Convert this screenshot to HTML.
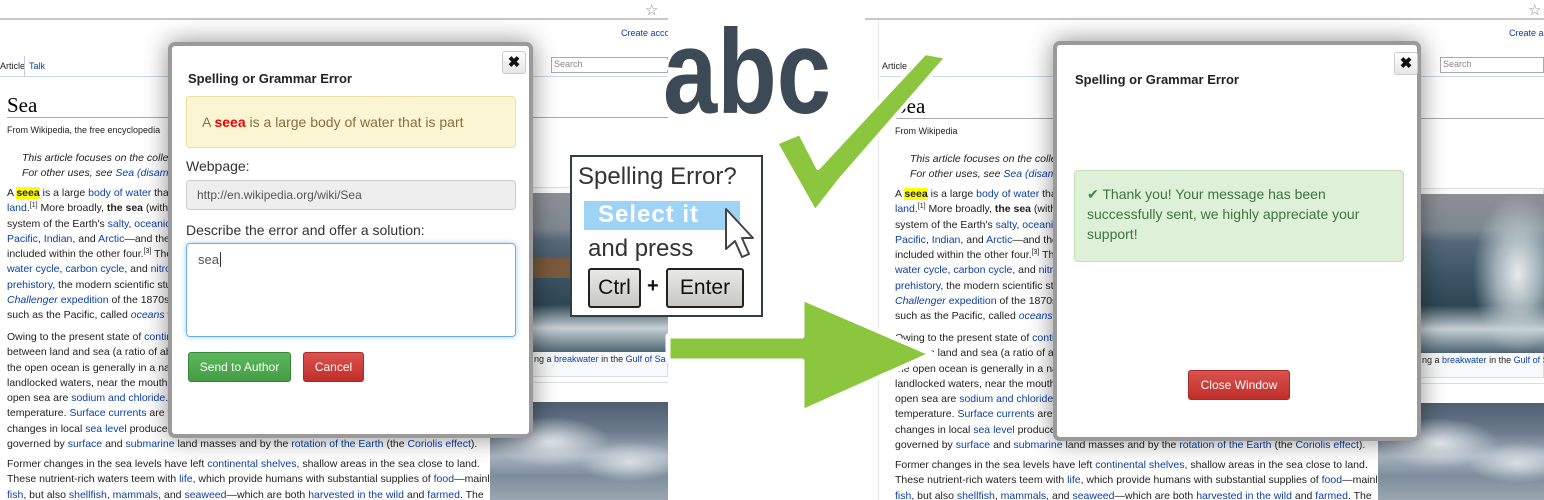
<!DOCTYPE html>
<html><head><meta charset="utf-8"><style>
*{margin:0;padding:0;box-sizing:border-box}
body{width:1544px;height:500px;overflow:hidden;background:#fff;position:relative;font-family:"Liberation Sans",sans-serif}
.abs{position:absolute}
.pg{position:absolute;top:0;height:500px;overflow:hidden;background:#fff}
.w{position:absolute;font-size:10.5px;color:#222;white-space:nowrap;line-height:15.3px}
.w a,.b{color:#0b3fa8}
sup{font-size:7px;line-height:0;vertical-align:4px}
.tl{position:absolute;left:0;right:0;top:18px;height:2px;background:#c8c8c8}
.modal{position:absolute;background:#fff;border:4px solid #9a9a9a;border-radius:7px;box-shadow:0 0 25px rgba(0,0,0,.45)}
.x{position:absolute;width:24px;height:23px;border:1px solid #ccc;border-radius:3px;background:linear-gradient(#fff,#e6e6e6);font-weight:bold;font-size:15px;text-align:center;line-height:21px;color:#111}
.ttl{position:absolute;font-weight:bold;font-size:13px;color:#222}
.btn{position:absolute;color:#fff;font-size:12px;text-align:center;border-radius:3px}
.sea{background:radial-gradient(ellipse 45px 80px at 140px 80px,rgba(240,244,245,.95) 0%,rgba(200,212,216,.7) 50%,transparent 100%),linear-gradient(180deg,#8d9096 0%,#7e8890 22%,#56697a 30%,#3d5666 50%,#2f4654 70%,#c5d0d4 85%,#4f6674 100%)}
.cloud{background:radial-gradient(ellipse 60px 25px at 60px 40px,#dfe4e8 0%,transparent 100%),radial-gradient(ellipse 50px 20px at 140px 60px,#d8dee3 0%,transparent 100%),linear-gradient(180deg,#4f5f70 0%,#6b7b8c 30%,#a9b5c0 55%,#7d8d9c 75%,#9aa7b2 100%)}
</style></head><body>

<!-- LEFT PAGE -->
<div class="pg" style="left:0;width:668px">
  <div class="tl"></div>
  <div class="abs" style="left:645px;top:1px;font-size:15px;color:#888">☆</div>
  <div class="abs b" style="left:621px;top:28px;font-size:9px;white-space:nowrap">Create account</div>
  <div class="abs" style="left:0;top:61px;font-size:9px;color:#222">Article</div>
  <div class="abs b" style="left:29px;top:61px;font-size:9px">Talk</div>
  <div class="abs" style="left:24px;top:56px;width:1px;height:20px;background:#bcd"></div>
  <div class="abs" style="left:0;top:76px;width:668px;height:1px;background:#c8d8ea"></div>
  <div class="abs" style="left:551px;top:57px;width:117px;height:16px;border:1px solid #aaa;font-size:9px;color:#888;padding:1px 2px">Search</div>
  <div class="abs" style="left:7px;top:93px;font-family:'Liberation Serif',serif;font-size:21px;color:#000">Sea</div>
  <div class="abs" style="left:7px;top:117px;width:661px;height:1px;background:#aaa"></div>
  <div class="abs" style="left:7px;top:125px;font-size:9px;color:#222">From Wikipedia, the free encyclopedia</div>
  <div class="w" style="left:22px;top:151px;font-style:italic">This article focuses on the collective body of salt water. For other uses, see Sea (disambiguation).<br>For other uses, see <a>Sea (disambiguation)</a>.</div>
  <div class="w" style="left:7px;top:186px">
A <b style="background:#ff0">seea</b> is a large <a>body of water</a> that is part of the world ocean<br>
<a>land</a>.<sup>[1]</sup> More broadly, <b>the sea</b> (with the definite article) is the interconnected<br>
system of the Earth's <a>salty</a>, <a>oceanic</a> waters—considered as one global ocean<br>
<a>Pacific</a>, <a>Indian</a>, and <a>Arctic</a>—and the waters of the seas<br>
included within the other four.<sup>[3]</sup> The sea moderates the Earth's<br>
<a>water cycle</a>, <a>carbon cycle</a>, and <a>nitrogen cycle</a>. The sea has been<br>
<a>prehistory</a>, the modern scientific study of the sea<br>
<a><i>Challenger</i> expedition</a> of the 1870s.<sup>[</sup> The sea<br>
such as the Pacific, called <a><i>oceans</i></a> with</div>
  <div class="w" style="left:7px;top:330px">
Owing to the present state of <a>continental drift</a>, the Northern Hemisphere<br>
between land and sea (a ratio of about 1:1.5), the Southern Hemisphere<br>
the open ocean is generally in a narrow range of salinity<br>
landlocked waters, near the mouths of large rivers<br>
open sea are <a>sodium and chloride</a>. Deep-sea water<br>
temperature. <a>Surface currents</a> are formed by the wind<br>
changes in local <a>sea level</a> produced by tides caused<br>
governed by <a>surface</a> and <a>submarine</a> land masses and by the <a>rotation of the Earth</a> (the <a>Coriolis effect</a>).</div>
  <div class="w" style="left:7px;top:457px">
Former changes in the sea levels have left <a>continental shelves</a>, shallow areas in the sea close to land.<br>
These nutrient-rich waters teem with <a>life</a>, which provide humans with substantial supplies of <a>food</a>—mainly<br>
<a>fish</a>, but also <a>shellfish</a>, <a>mammals</a>, and <a>seaweed</a>—which are both <a>harvested in the wild</a> and <a>farmed</a>. The</div>
  <div class="abs" style="left:486px;top:187px;width:182px;height:190px;border:1px solid #ddd;background:#f8f9fa"></div>
  <div class="abs sea" style="left:490px;top:193px;width:178px;height:159px;background:linear-gradient(180deg,#8d9096 0%,#7e8890 22%,#56697a 30%,#3d5666 50%,#2f4654 70%,#c5d0d4 85%,#4f6674 100%)"></div>
  <div class="abs" style="left:533px;top:258px;width:55px;height:20px;background:#7a5a3c"></div>
  <div class="w" style="left:534px;top:352px;font-size:9px">ng a <a>breakwater</a> in the <a>Gulf of San</a></div>
  <div class="abs" style="left:486px;top:382px;width:182px;height:1px;background:#ddd"></div>
  <div class="abs cloud" style="left:490px;top:402px;width:178px;height:98px"></div>

  <div class="modal" style="left:168px;top:42px;width:365px;height:396px">
    <div class="x" style="left:330px;top:5px">✖</div>
    <div class="ttl" style="left:16px;top:25px">Spelling or Grammar Error</div>
    <div class="abs" style="left:14px;top:50px;width:330px;height:52px;background:#fcf5d4;border:1px solid #f0df9a;border-radius:4px;font-size:14px;color:#8a6d3b;padding:17px 15px">A <b style="color:#e00">seea</b> is a large body of water that is part</div>
    <div class="abs" style="left:14px;top:112px;font-size:14px;color:#333">Webpage:</div>
    <div class="abs" style="left:14px;top:134px;width:330px;height:30px;background:#eee;border:1px solid #ccc;border-radius:4px;font-size:12px;color:#555;padding:7px 10px">http://en.wikipedia.org/wiki/Sea</div>
    <div class="abs" style="left:14px;top:176px;font-size:14px;color:#333">Describe the error and offer a solution:</div>
    <div class="abs" style="left:14px;top:197px;width:330px;height:94px;border:1px solid #66afe9;border-radius:4px;box-shadow:0 0 6px rgba(102,175,233,.6);font-size:13px;color:#555;padding:8px 11px">sea<span style="border-left:1px solid #333;margin-left:1px"></span></div>
    <div class="btn" style="left:16px;top:306px;width:103px;height:30px;background:linear-gradient(#5cb85c,#449d44);border:1px solid #398439;line-height:28px">Send to Author</div>
    <div class="btn" style="left:131px;top:306px;width:61px;height:30px;background:linear-gradient(#d9534f,#c12e2a);border:1px solid #ac2925;line-height:28px">Cancel</div>
  </div>
</div>

<!-- RIGHT PAGE -->
<div class="pg" style="left:865px;width:679px">
  <div class="tl"></div>
  <div class="abs" style="left:663px;top:1px;font-size:15px;color:#888">☆</div>
  <div class="abs b" style="left:644px;top:28px;font-size:9px;white-space:nowrap">Create account</div>
  <div class="abs" style="left:13px;top:20px;width:1px;height:480px;background:#e4e8ee"></div>
  <div class="abs" style="left:17px;top:61px;font-size:9px;color:#222">Article</div>
  <div class="abs" style="left:15px;top:76px;width:664px;height:1px;background:#c8d8ea"></div>
  <div class="abs" style="left:575px;top:57px;width:104px;height:16px;border:1px solid #aaa;font-size:9px;color:#888;padding:1px 2px">Search</div>
  <div class="abs" style="left:30px;top:94px;font-family:'Liberation Serif',serif;font-size:21px;color:#000">Sea</div>
  <div class="abs" style="left:30px;top:118px;width:649px;height:1px;background:#aaa"></div>
  <div class="abs" style="left:30px;top:126px;font-size:9px;color:#222">From Wikipedia</div>
  <div class="w" style="left:45px;top:152px;font-style:italic">This article focuses on the collective body<br>For other uses, see <a>Sea (disambiguation)</a>.</div>
  <div class="w" style="left:30px;top:187px">
A <b style="background:#ff0">seea</b> is a large <a>body of water</a> that is part<br>
<a>land</a>.<sup>[1]</sup> More broadly, <b>the sea</b> (with the<br>
system of the Earth's <a>salty</a>, <a>oceanic</a> waters<br>
<a>Pacific</a>, <a>Indian</a>, and <a>Arctic</a>—and the waters<br>
included within the other four.<sup>[3]</sup> The sea<br>
<a>water cycle</a>, <a>carbon cycle</a>, and <a>nitrogen</a><br>
<a>prehistory</a>, the modern scientific study<br>
<a><i>Challenger</i> expedition</a> of the 1870s.<sup>[</sup><br>
such as the Pacific, called <a><i>oceans</i></a> with</div>
  <div class="w" style="left:30px;top:331px">
Owing to the present state of <a>continental</a><br>
between land and sea (a ratio of about<br>
the open ocean is generally in a narrow<br>
landlocked waters, near the mouths<br>
open sea are <a>sodium and chloride</a>. Deep<br>
temperature. <a>Surface currents</a> are formed<br>
changes in local <a>sea level</a> produced by<br>
governed by <a>surface</a> and <a>submarine</a> land masses and by the <a>rotation of the Earth</a> (the <a>Coriolis effect</a>).</div>
  <div class="w" style="left:30px;top:458px">
Former changes in the sea levels have left <a>continental shelves</a>, shallow areas in the sea close to land.<br>
These nutrient-rich waters teem with <a>life</a>, which provide humans with substantial supplies of <a>food</a>—mainly<br>
<a>fish</a>, but also <a>shellfish</a>, <a>mammals</a>, and <a>seaweed</a>—which are both <a>harvested in the wild</a> and <a>farmed</a>. The</div>
  <div class="abs" style="left:509px;top:188px;width:170px;height:190px;border:1px solid #ddd;background:#f8f9fa"></div>
  <div class="abs sea" style="left:513px;top:194px;width:166px;height:159px"></div>
  <div class="w" style="left:557px;top:353px;font-size:9px">ng a <a>breakwater</a> in the <a>Gulf of San</a></div>
  <div class="abs" style="left:509px;top:383px;width:170px;height:1px;background:#ddd"></div>
  <div class="abs cloud" style="left:513px;top:403px;width:166px;height:97px"></div>

  <div class="modal" style="left:188px;top:41px;width:368px;height:400px">
    <div class="x" style="left:337px;top:7px">✖</div>
    <div class="ttl" style="left:18px;top:27px">Spelling or Grammar Error</div>
    <div class="abs" style="left:17px;top:125px;width:330px;height:92px;background:#dff0d8;border:1px solid #c3e0b5;border-radius:4px;font-size:14px;color:#3c763d;padding:13px 12px;line-height:20px"><span style="color:#3c8c3c">✔</span> Thank you! Your message has been successfully sent, we highly appreciate your support!</div>
    <div class="btn" style="left:131px;top:325px;width:102px;height:30px;background:linear-gradient(#d9534f,#c12e2a);border:1px solid #ac2925;line-height:28px">Close Window</div>
  </div>
</div>

<!-- MIDDLE GRAPHICS -->
<svg class="abs" style="left:0;top:0" width="1544" height="500">
  <text x="663" y="113" font-family="Liberation Sans,sans-serif" font-weight="bold" font-size="120" fill="#3b4a54" stroke="#fff" stroke-width="6" paint-order="stroke" textLength="168" lengthAdjust="spacingAndGlyphs">abc</text>
  <polygon points="776,143 800,133 818,168 925,53 947,57 840,180 815,212" fill="#8cc63f" stroke="#fff" stroke-width="4" stroke-linejoin="round"/>
  <polygon points="668,336 802,336 802,298 932,354 802,412 802,361 668,361" fill="#8cc63f" stroke="#fff" stroke-width="5" stroke-linejoin="round"/>
</svg>

<div class="abs" style="left:570px;top:155px;width:193px;height:162px;background:#fff;border:2px solid #2f3d47">
  <div class="abs" style="left:6px;top:6px;font-size:24px;color:#333;white-space:nowrap">Spelling Error?</div>
  <div class="abs" style="left:12px;top:44px;width:156px;height:29px;background:#9fd3f5"></div>
  <div class="abs" style="left:26px;top:44px;font-size:24px;font-weight:bold;color:#fff;letter-spacing:1px;white-space:nowrap">Select it</div>
  <div class="abs" style="left:16px;top:78px;font-size:24px;color:#333;white-space:nowrap">and press</div>
  <svg class="abs" style="left:150px;top:50px" width="34" height="56"><polygon points="4,2 4,42 13,34 20,50 27,47 20,31 31,31" fill="#fff" stroke="#444" stroke-width="2" stroke-linejoin="round"/></svg>
  <div class="abs" style="left:16px;top:111px;width:53px;height:40px;border:2px solid #222;border-radius:3px;background:linear-gradient(#e8e8e4,#c8c8c4);font-size:21px;text-align:center;line-height:36px;color:#111">Ctrl</div>
  <div class="abs" style="left:75px;top:118px;font-size:20px;font-weight:bold;color:#111">+</div>
  <div class="abs" style="left:94px;top:111px;width:78px;height:40px;border:2px solid #222;border-radius:3px;background:linear-gradient(#e8e8e4,#c8c8c4);font-size:21px;text-align:center;line-height:36px;color:#111">Enter</div>
</div>
</body></html>
